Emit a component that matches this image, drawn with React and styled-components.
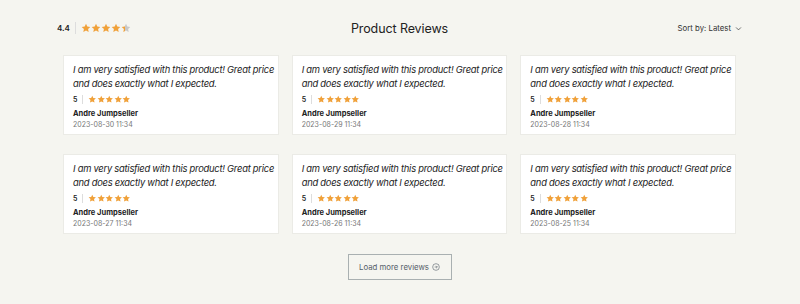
import styled, { createGlobalStyle } from 'styled-components';

const GlobalStyle = createGlobalStyle`
  html, body {
    margin: 0;
    padding: 0;
    background: #f5f5f0;
    font-family: 'Inter', 'Liberation Sans', sans-serif;
  }
`;

const reviews = [
  { date: '2023-08-30 11:34' },
  { date: '2023-08-29 11:34' },
  { date: '2023-08-28 11:34' },
  { date: '2023-08-27 11:34' },
  { date: '2023-08-26 11:34' },
  { date: '2023-08-25 11:34' },
];

const Page = styled.div`
  width: 800px;
  height: 304px;
  box-sizing: border-box;
  padding: 20px 58px 0 57px;
  display: flex;
  flex-direction: column;
  align-items: center;
`;

const Header = styled.div`
  width: 100%;
  display: grid;
  grid-template-columns: 1fr auto 1fr;
  align-items: center;
  height: 16px;
`;

const Score = styled.div`
  display: flex;
  align-items: center;
  gap: 5px;
  font-size: 8px;
  font-weight: 600;
  color: #222;
`;

const Divider = styled.span`
  width: 1px;
  height: ${p => p.$h || 11}px;
  background: #ddd;
`;

const Title = styled.h2`
  margin: 0;
  font-size: 12.5px;
  font-weight: 400;
  color: #222;
  letter-spacing: -0.1px;
`;

const Sort = styled.div`
  justify-self: end;
  display: flex;
  align-items: center;
  gap: 4px;
  font-size: 7.8px;
  color: #333;
`;

const Stars = styled.div`
  display: flex;
  gap: ${p => p.$gap}px;
`;

const Grid = styled.div`
  margin-top: 19px;
  width: 673px;
  display: grid;
  grid-template-columns: repeat(3, 1fr);
  column-gap: 13px;
  row-gap: 19px;
`;

const Card = styled.div`
  background: #fff;
  border: 1px solid #ebebe6;
  box-sizing: border-box;
  height: 80px;
  padding: 7px 2px 0 9px;
  overflow: hidden;
`;

const Quote = styled.p`
  margin: 0;
  font-style: italic;
  font-size: 9.4px;
  line-height: 13.5px;
  color: #222;
  letter-spacing: -0.25px;
  white-space: nowrap;
`;

const RatingRow = styled.div`
  margin-top: 5px;
  display: flex;
  align-items: center;
  gap: 5px;
  font-size: 7px;
  font-weight: 600;
  color: #222;
`;

const Name = styled.div`
  margin-top: 5px;
  font-size: 7.5px;
  font-weight: 700;
  color: #222;
`;

const DateText = styled.div`
  margin-top: 2px;
  font-size: 7px;
  color: #777;
`;

const LoadButton = styled.button`
  margin-top: 20px;
  width: 104px;
  height: 26px;
  border: 1px solid #a9b0b1;
  background: transparent;
  font-family: inherit;
  font-size: 7.8px;
  color: #55606a;
  display: flex;
  align-items: center;
  justify-content: center;
  gap: 3px;
  cursor: pointer;
`;

const Star = ({ size, fill = 1, id }) => (
  <svg width={size} height={size} viewBox="0 0 24 24">
    <defs>
      <linearGradient id={id}>
        <stop offset={fill} stopColor="#f0a13a" />
        <stop offset={fill} stopColor="#c8c8c8" />
      </linearGradient>
    </defs>
    <path
      d="M12 1.8l3.1 6.6 7.2.9-5.3 5 1.4 7.2L12 18l-6.4 3.5 1.4-7.2-5.3-5 7.2-.9z"
      fill={`url(#${id})`}
    />
  </svg>
);

const StarRow = ({ count = 5, rating, size, gap, prefix }) => (
  <Stars $gap={gap}>
    {Array.from({ length: count }).map((_, i) => (
      <Star
        key={i}
        id={`${prefix}-${i}`}
        size={size}
        fill={Math.max(0, Math.min(1, rating - i))}
      />
    ))}
  </Stars>
);

export default function App() {
  return (
    <>
      <GlobalStyle />
      <Page>
        <Header>
          <Score>
            4.4
            <Divider $h={12} />
            <StarRow rating={4.4} size={10} gap={-0.5} prefix="top" />
          </Score>
          <Title>Product Reviews</Title>
          <Sort>
            Sort by: Latest
            <svg width="7" height="7" viewBox="0 0 10 10">
              <path d="M1.5 3.5L5 7l3.5-3.5" fill="none" stroke="#333" strokeWidth="1" />
            </svg>
          </Sort>
        </Header>
        <Grid>
          {reviews.map((r, i) => (
            <Card key={r.date}>
              <Quote>
                I am very satisfied with this product! Great price
                <br />
                and does exactly what I expected.
              </Quote>
              <RatingRow>
                5
                <Divider $h={9} />
                <StarRow rating={5} size={8.5} gap={0} prefix={`c${i}`} />
              </RatingRow>
              <Name>Andre Jumpseller</Name>
              <DateText>{r.date}</DateText>
            </Card>
          ))}
        </Grid>
        <LoadButton>
          Load more reviews
          <svg width="8" height="8" viewBox="0 0 24 24" fill="none" stroke="#55606a" strokeWidth="1.8">
            <circle cx="12" cy="12" r="10" />
            <path d="M8 12h8M12.5 8.5L16 12l-3.5 3.5" />
          </svg>
        </LoadButton>
      </Page>
    </>
  );
}
